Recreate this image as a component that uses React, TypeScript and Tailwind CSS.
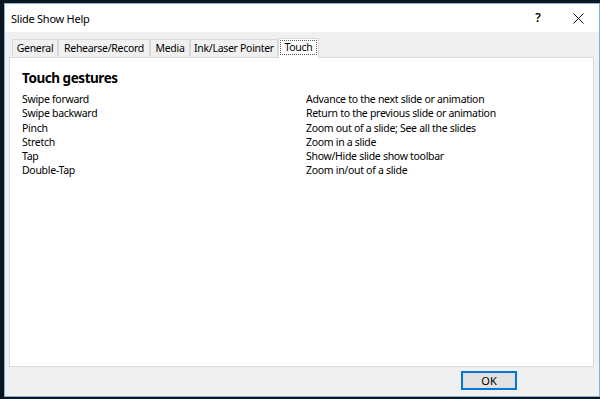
import React from 'react'

const gestures: [string, string][] = [
  ['Swipe forward', 'Advance to the next slide or animation'],
  ['Swipe backward', 'Return to the previous slide or animation'],
  ['Pinch', 'Zoom out of a slide; See all the slides'],
  ['Stretch', 'Zoom in a slide'],
  ['Tap', 'Show/Hide slide show toolbar'],
  ['Double-Tap', 'Zoom in/out of a slide'],
]

const tabs: [string, string][] = [
  ['General', 'w-[46px]'],
  ['Rehearse/Record', 'w-[92px]'],
  ['Media', 'w-[40px]'],
  ['Ink/Laser Pointer', 'w-[88px]'],
]

export default function App() {
  return (
    <div
      className="w-[600px] h-[399px] bg-[#0b1620] pt-[3px] pl-[4px] pb-[2px] overflow-hidden"
      style={{ fontFamily: '"Noto Sans", "Open Sans", sans-serif' }}
    >
      <div className="h-full border border-[#7fb2da] bg-[#f0f0f0] flex flex-col text-[#000]">
        {/* title bar */}
        <div className="h-[28px] bg-white flex items-center pl-[6px] shrink-0">
          <span className="text-[11px] tracking-[-0.25px] leading-none">Slide Show Help</span>
          <div className="ml-auto flex items-center h-full">
            <span className="text-[12px] w-[38px] text-center font-semibold leading-none">?</span>
            <div className="w-[42px] h-full flex items-center justify-center">
              <svg width="11" height="11" viewBox="0 0 11 11">
                <path d="M0.5 0.5 L10.5 10.5 M10.5 0.5 L0.5 10.5" stroke="#111" strokeWidth="1" fill="none" />
              </svg>
            </div>
          </div>
        </div>

        {/* body */}
        <div className="flex-1 flex flex-col px-[4px] pt-[6px]">
          <div className="flex items-end h-[19px] pl-[3px] relative z-10 text-[10.5px] tracking-[-0.3px] leading-none">
            {tabs.map(([t, w]) => (
              <div
                key={t}
                className={`${w} h-[17px] mb-[1px] border border-b-0 border-[#d9d9d9] bg-[#f0f0f0] flex items-center justify-center`}
              >
                {t}
              </div>
            ))}
            <div className="w-[41px] h-[20px] -mb-[1px] border border-b-0 border-[#d9d9d9] bg-white px-[1px] pt-[1px] flex items-start">
              <span className="w-full border border-dotted border-[#555] h-[15px] flex items-center justify-center">
                Touch
              </span>
            </div>
          </div>
          <div className="h-[310px] bg-white border border-[#d9d9d9] mr-[1px] pl-[12px] pt-[10px]">
            <div className="text-[13.5px] tracking-[-0.45px] font-bold leading-[20px] mb-[4px]">Touch gestures</div>
            <div className="grid grid-cols-[284px_1fr] text-[10.5px] tracking-[-0.3px] leading-[14.3px]">
              {gestures.map(([g, d]) => (
                <React.Fragment key={g}>
                  <div>{g}</div>
                  <div>{d}</div>
                </React.Fragment>
              ))}
            </div>
          </div>
          <div className="flex justify-end pt-[4px] pr-[78px]">
            <button className="w-[56px] h-[19px] border-2 border-[#0078d7] bg-[#e1e1e1] text-[11px] leading-none">
              OK
            </button>
          </div>
        </div>
      </div>
    </div>
  )
}
